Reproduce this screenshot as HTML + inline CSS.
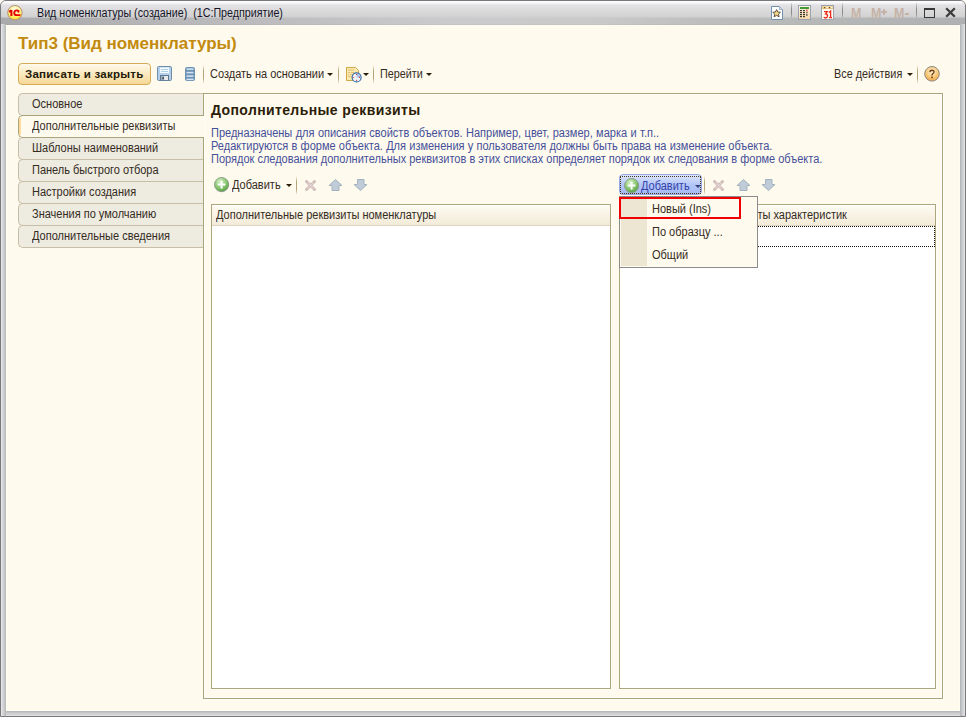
<!DOCTYPE html>
<html><head><meta charset="utf-8">
<style>
*{margin:0;padding:0;box-sizing:border-box}
html,body{width:966px;height:717px;overflow:hidden;background:#FFFAEE}
body{position:relative;font-family:"Liberation Sans",sans-serif;font-size:11px;color:#342C1E}
.a{position:absolute;white-space:nowrap}
svg.a{overflow:visible}
#frame{position:absolute;left:0;top:0;width:966px;height:717px;background:#D0D0D2;border:1px solid #79787C;border-radius:6px 6px 0 0}
#ls{position:absolute;left:1px;top:24px;width:5px;height:692px;background:linear-gradient(to right,#E4E4E4 0,#E4E4E4 1px,#D8D6D8 1px,#D8D6D8 2px,#D2D2D6 2px,#D2D2D6 3px,#C4C6C8 3px,#C4C6C8 4px,#BBBCBE 4px)}
#rs{position:absolute;left:960px;top:24px;width:5px;height:692px;background:linear-gradient(to right,#B4B9BC 0,#B4B9BC 1px,#C0C2C4 1px,#C0C2C4 2px,#CFCFD2 2px,#CFCFD2 3px,#D2D2D8 3px,#D2D2D8 4px,#E2E2E4 4px)}
#bs{position:absolute;left:6px;top:711px;width:954px;height:5px;background:linear-gradient(#BAB9BD 0,#BAB9BD 1px,#C4C4C6 1px,#C4C4C6 2px,#D0D0D0 2px,#D0D0D0 4px,#E0DFE2 4px)}
#band{position:absolute;left:1px;top:17px;width:964px;height:7px;background:linear-gradient(to right,#AAAAAD 0,#B6B5B8 150px,#BFBFC2 300px,#CBCBCD 450px,#C9C9CA 600px,#BEBEBF 700px,#B7B8B8 800px,#AFB1B3 964px);border-top:1px solid rgba(208,208,206,.6)}
#inner{position:absolute;left:1px;top:24px;width:964px;height:1px;background:linear-gradient(to right,#A6A6A9 0,#B0AFB2 150px,#B9B9BC 300px,#C4C4C6 450px,#C3C3C4 600px,#B8B8B9 700px,#B2B3B3 800px,#AAACAE 964px)}
#tb{position:absolute;left:1px;top:1px;width:964px;height:23px;background:linear-gradient(#FDFDFD 0,#F8F8F8 2px,#EAEAEC 3px,#E4E2E4 4px,#DEDCDE 8px,#D8D8D8 11px,#D4D4D4 15px,#CECECE 16px,#C8C8C8 17px,#C8C8C8 22px);border-radius:5px 5px 0 0}
#content{position:absolute;left:6px;top:25px;width:954px;height:686px;background:#FFFAEE;box-shadow:inset 1px 0 0 #FFFFF2,inset -1px -1px 0 #FFFFF2}
.sep{position:absolute;width:1px;background:linear-gradient(rgba(180,165,120,0),#B4A478 30%,#B4A478 70%,rgba(180,165,120,0))}
.tsep{position:absolute;width:1px;background:linear-gradient(rgba(130,130,134,.2),#8C8C90 40%,#8C8C90 70%,rgba(130,130,134,.2))}
.arr{position:absolute;width:0;height:0;border-left:3px solid transparent;border-right:3px solid transparent;border-top:3px solid #2A1E08}
.tab{position:absolute;left:18px;width:186px;height:23px;border:1px solid #C6BEA6;border-right:none;border-radius:5px 0 0 5px;background:#EEEBE1}
.tab span{position:absolute;left:13px;top:3px;font-size:12px;transform:scaleX(.917);transform-origin:0 0}
.panel{position:absolute;border:1px solid #A9A47C;box-shadow:1px 1px 0 #FFFFF8,inset 1px 1px 0 #FFFFF8,inset -1px -1px 0 #FFFFF8}
.tbl{position:absolute;border:1px solid #ABA67E;background:#fff;overflow:hidden;box-shadow:1px 1px 0 #FFFFF8}
.th{position:absolute;left:0;top:0;right:0;height:21px;background:linear-gradient(#FFFFFF 0,#FFFFFF 1px,#FDFAF1 1px,#F3EBD8 20px,#DCD4BC 20px)}
.desc{color:#44509A}
.dis{position:absolute}
.t{font-size:12px;transform:scaleX(.917);transform-origin:0 0}
</style></head><body>
<div id="frame"></div>
<div id="tb"></div>
<div id="band"></div>
<div id="inner"></div>
<div id="ls"></div><div id="rs"></div><div id="bs"></div>
<div id="content"></div>

<!-- title -->
<svg class="a" style="left:7px;top:5px" width="16" height="16" viewBox="0 0 16 16">
<defs><radialGradient id="g1c" cx="50%" cy="30%" r="70%"><stop offset="0" stop-color="#FFFFF0"/><stop offset=".5" stop-color="#FFF59A"/><stop offset="1" stop-color="#FFE020"/></radialGradient></defs>
<circle cx="7.9" cy="7.7" r="7.2" fill="url(#g1c)" stroke="#B48C74" stroke-width="1"/>
<path d="M2.1 6.9 L4.4 5.3 M4.4 5.1 V10.9" fill="none" stroke="#E40000" stroke-width="2"/>
<path d="M11.9 6.4 Q11 5.3 9.7 5.4 Q7.2 5.6 7.2 8.1 Q7.3 10.1 9.6 10.1 H13.4" fill="none" stroke="#E40000" stroke-width="1.8"/>
<circle cx="11.4" cy="6.7" r="1.05" fill="#E40000"/>
</svg>
<div class="a t" style="left:37px;top:6px;transform:scaleX(.892);color:#141428">Вид номенклатуры (создание)&nbsp; (1С:Предприятие)</div>

<!-- title bar right icons -->
<svg class="a" style="left:771px;top:6px" width="13" height="14" viewBox="0 0 13 14">
<path d="M0.5 0.5 H8.5 L11.5 3.5 V13.5 H0.5Z" fill="#FFFFFF" stroke="#7090B0"/>
<path d="M8.5 0.5 V3.5 H11.5" fill="#DCE6F0" stroke="#9CB2C8"/>
<path d="M5.6 3.6 L6.8 6 L9.4 6.3 L7.5 8.1 L8.1 10.8 L5.6 9.4 L3.1 10.8 L3.7 8.1 L1.8 6.3 L4.4 6Z" fill="#F4D688" stroke="#4A4438" stroke-width=".9"/>
</svg>
<div class="tsep" style="left:791px;top:3px;height:15px"></div>
<svg class="a" style="left:798px;top:5px" width="13" height="15" viewBox="0 0 13 15">
<defs><linearGradient id="gcalc" x1="0" y1="0" x2="0" y2="1"><stop offset="0" stop-color="#FFF6E4"/><stop offset="1" stop-color="#F6D6A6"/></linearGradient>
<linearGradient id="gcal" x1="0" y1="0" x2="0" y2="1"><stop offset="0" stop-color="#F6DCA0"/><stop offset="1" stop-color="#E6B868"/></linearGradient></defs>
<rect x=".5" y=".5" width="12" height="14" fill="url(#gcalc)" stroke="#9AA4B0"/>
<rect x="2" y="2" width="9" height="2" fill="#3E9C38"/>
<g fill="#3C3830"><rect x="2" y="5" width="2" height="1.2"/><rect x="5" y="5" width="2" height="1.2"/><rect x="2" y="7" width="2" height="1.2"/><rect x="5" y="7" width="2" height="1.2"/><rect x="8.3" y="7" width="1.2" height="1.2"/><rect x="2" y="9" width="2" height="1.2"/><rect x="5" y="9" width="2" height="1.2"/><rect x="8.3" y="9" width="1.2" height="1.8"/><rect x="2" y="11" width="2" height="1.2"/><rect x="5" y="11" width="2" height="1.2"/></g>
<rect x="8.3" y="4.6" width="1.2" height="1.8" fill="#E82020"/>
</svg>
<svg class="a" style="left:821px;top:5px" width="13" height="15" viewBox="0 0 13 15">
<rect x=".5" y=".5" width="12" height="14" fill="#FFFAF2" stroke="#9AA4B0"/>
<rect x="1" y="1" width="11" height="3" fill="url(#gcal)"/>
<g fill="#6A4A28"><rect x="3" y="2" width="1.2" height="1.2"/><rect x="8" y="2" width="1.2" height="1.2"/></g>
<g fill="#FFFFFF"><rect x="5.5" y="2" width="1.2" height="1.2"/><rect x="10" y="2" width="1.2" height="1.2"/></g>
<path d="M3 6.6 H6.3 L4.6 8.9 Q6.6 9 6.5 11 Q6.3 13 4.5 13 Q3.3 13 2.8 12.2" fill="none" stroke="#EA2A1A" stroke-width="1.3"/>
<path d="M7.9 7.4 L9.6 6.1 V12.9 M8 12.6 H11" fill="none" stroke="#EA2A1A" stroke-width="1.3"/>
</svg>
<div class="tsep" style="left:842px;top:3px;height:15px"></div>
<div class="a" style="left:851px;top:5px;font:bold 14.5px 'Liberation Sans';color:#C6B4A8;transform:scaleX(.86);transform-origin:0 0">M</div>
<div class="a" style="left:871px;top:5px;font:bold 14.5px 'Liberation Sans';color:#C6B4A8;transform:scaleX(.86);transform-origin:0 0">M</div>
<div class="a" style="left:881px;top:11px;width:6px;height:2px;background:#C6B4A8"></div><div class="a" style="left:883px;top:9px;width:2px;height:6px;background:#C6B4A8"></div>
<div class="a" style="left:894px;top:5px;font:bold 14.5px 'Liberation Sans';color:#C6B4A8;transform:scaleX(.86);transform-origin:0 0">M</div>
<div class="a" style="left:905px;top:13px;width:4px;height:2px;background:#C6B4A8"></div>
<div class="tsep" style="left:916px;top:3px;height:15px"></div>
<div class="a" style="left:924px;top:8px;width:11px;height:10px;border:1px solid #383838;border-top-width:2px"></div>
<svg class="a" style="left:945px;top:7px" width="11" height="11" viewBox="0 0 11 11"><path d="M1.2 1.2 L9.8 9.8 M9.8 1.2 L1.2 9.8" stroke="#3C3C3C" stroke-width="2.3"/></svg>

<!-- form header -->
<div class="a" style="left:18px;top:34px;font:bold 17px 'Liberation Sans';color:#C28A0E">Тип3 (Вид номенклатуры)</div>

<!-- command bar -->
<div class="a" style="left:18px;top:63px;width:133px;height:22px;border:1px solid #D6AC58;border-radius:4px;background:linear-gradient(#FFFAEC 0,#FBEBC4 45%,#F4D896 100%)"></div>
<div class="a" style="left:25px;top:68px;font:bold 11.5px 'Liberation Sans';letter-spacing:0.25px;color:#241A08">Записать и закрыть</div>
<svg class="a" style="left:157px;top:66px" width="15" height="15" viewBox="0 0 15 15">
<rect x=".5" y=".5" width="14" height="14" rx="1.2" fill="#B4D0EA" stroke="#6E8EA8"/>
<rect x="3" y="1.5" width="9" height="5.5" fill="#F6FBFF"/>
<rect x="4" y="3" width="7" height=".9" fill="#A6CCE0"/><rect x="4" y="5" width="7" height=".9" fill="#A6CCE0"/>
<rect x="3" y="9" width="9" height="5.5" fill="#5C7890"/>
<rect x="4.5" y="10" width="6.5" height="4" fill="#E6E8EA"/>
<rect x="5.3" y="10.6" width="1.6" height="3" fill="#2E4860"/>
</svg>
<svg class="a" style="left:185px;top:67px" width="10" height="14" viewBox="0 0 10 14">
<rect x="0" y="0" width="10" height="14" rx="2" fill="#6C92B2"/>
<g fill="#D2E4F6"><rect x="1.5" y="1.3" width="7" height="1.6"/><rect x="1.5" y="4.8" width="7" height="1.6"/><rect x="1.5" y="8.3" width="7" height="1.6"/><rect x="1.5" y="11.6" width="7" height="1.5"/></g>
</svg>
<div class="sep" style="left:203px;top:65px;height:19px"></div>
<div class="a t" style="left:210px;top:67px">Создать на основании</div>
<div class="arr" style="left:327px;top:73px"></div>
<div class="sep" style="left:338px;top:65px;height:19px"></div>
<svg class="a" style="left:346px;top:67px" width="16" height="16" viewBox="0 0 16 16">
<path d="M0.5 0.5 H9.5 L12.5 3.5 V13.5 H0.5Z" fill="#FBEAB0" stroke="#D0A848"/>
<g fill="#E0C070"><rect x="2" y="2.5" width="6" height="1"/><rect x="2" y="5" width="2" height="1"/><rect x="5" y="5" width="3" height="1"/><rect x="2" y="7" width="1" height="1"/><rect x="4" y="7" width="3" height="1"/><rect x="2" y="9" width="3" height="1"/></g>
<circle cx="10.6" cy="10.4" r="4.5" fill="#EEF4FE" stroke="#3A6CA6" stroke-width="1.2"/>
<path d="M10.6 10.4 V6.8 A3.6 3.6 0 0 1 14.2 10.4Z" fill="#A8C0E8"/>
<g fill="#E02020"><rect x="10.1" y="7" width="1" height="1"/><rect x="10.1" y="12.8" width="1" height="1"/><rect x="7.2" y="9.9" width="1" height="1"/><rect x="13" y="9.9" width="1" height="1"/></g>
</svg>
<div class="arr" style="left:363px;top:73px"></div>
<div class="sep" style="left:373px;top:65px;height:19px"></div>
<div class="a t" style="left:380px;top:67px;transform:scaleX(.9)">Перейти</div>
<div class="arr" style="left:426px;top:73px"></div>
<div class="a t" style="left:834px;top:67px;transform:scaleX(.905)">Все действия</div>
<div class="arr" style="left:907px;top:73px"></div>
<div class="sep" style="left:917px;top:65px;height:19px"></div>
<svg class="a" style="left:924px;top:66px" width="16" height="16" viewBox="0 0 16 16">
<defs><radialGradient id="ghelp" cx="50%" cy="35%" r="65%"><stop offset="0" stop-color="#FFF4DC"/><stop offset=".6" stop-color="#F8C878"/><stop offset="1" stop-color="#EEA446"/></radialGradient></defs>
<circle cx="8" cy="7.8" r="7.3" fill="url(#ghelp)" stroke="#8E8A84" stroke-width="1"/>
<path d="M5.9 6.1 Q6 4.3 8.1 4.3 Q10.1 4.4 10 6 Q9.9 7.1 8.7 7.7 Q8 8.2 8 9.5" fill="none" stroke="#704014" stroke-width="1.4"/>
<rect x="7.2" y="10.6" width="1.6" height="1.6" fill="#704014"/>
</svg>

<!-- tabs -->
<div class="tab" style="top:93px"><span>Основное</span></div>
<div class="tab" style="top:137px"><span>Шаблоны наименований</span></div>
<div class="tab" style="top:159px"><span>Панель быстрого отбора</span></div>
<div class="tab" style="top:181px"><span>Настройки создания</span></div>
<div class="tab" style="top:203px"><span>Значения по умолчанию</span></div>
<div class="tab" style="top:225px"><span>Дополнительные сведения</span></div>

<!-- panel -->
<div class="panel" style="left:203px;top:93px;width:740px;height:606px"></div>
<div class="tab" style="top:115px;background:#FFFAEE;width:186px;border-color:#A9A47C"><span>Дополнительные реквизиты</span></div>
<div class="a" style="left:19px;top:118px;width:2px;height:17px;background:#FFDA9C"></div>

<div class="a" style="left:211px;top:102px;font:bold 14px 'Liberation Sans';letter-spacing:0.38px;color:#2A2008">Дополнительные реквизиты</div>
<div class="a desc t" style="left:211px;top:126px;word-spacing:0.4px">Предназначены для описания свойств объектов. Например, цвет, размер, марка и т.п..</div>
<div class="a desc t" style="left:211px;top:139px;word-spacing:0.2px">Редактируются в форме объекта. Для изменения у пользователя должны быть права на изменение объекта.</div>
<div class="a desc t" style="left:211px;top:152px">Порядок следования дополнительных реквизитов в этих списках определяет порядок их следования в форме объекта.</div>

<!-- left table toolbar -->
<svg class="a" style="left:214px;top:177px" width="16" height="16" viewBox="0 0 16 16">
<defs><radialGradient id="gplus" cx="40%" cy="30%" r="75%"><stop offset="0" stop-color="#D8F2C8"/><stop offset=".55" stop-color="#8CC874"/><stop offset="1" stop-color="#4F9A3E"/></radialGradient></defs>
<circle cx="7.6" cy="7.6" r="7.1" fill="url(#gplus)" stroke="#8E9E8C" stroke-width="1"/>
<path d="M7.6 3.8 V11.4 M3.8 7.6 H11.4" stroke="#FFFFFF" stroke-width="2"/>
</svg>
<div class="a t" style="left:232px;top:178px">Добавить</div>
<div class="arr" style="left:286px;top:184px"></div>
<div class="sep" style="left:296px;top:176px;height:19px"></div>
<svg class="a" style="left:305px;top:180px" width="11" height="11" viewBox="0 0 11 11"><path d="M1.5 1.5 L9.5 9.5 M9.5 1.5 L1.5 9.5" stroke="#CDB6B4" stroke-width="2.8" stroke-linecap="round"/><path d="M2 2 L9 9 M9 2 L2 9" stroke="#E2D4D2" stroke-width="1.1"/></svg>
<svg class="a" style="left:329px;top:179px" width="14" height="12" viewBox="0 0 14 12"><path d="M6.5 0.5 L13 6.5 H10 V11.5 H3 V6.5 H0 Z" fill="#BFCCD8" stroke="#A2B2C0" stroke-width="1" stroke-linejoin="round"/></svg>
<svg class="a" style="left:354px;top:179px" width="14" height="12" viewBox="0 0 14 12"><path d="M3.5 0.5 H10 V5.5 H13 L6.5 11.5 L0 5.5 H3.5Z" fill="#BFCCD8" stroke="#A2B2C0" stroke-width="1" stroke-linejoin="round"/></svg>

<!-- left table -->
<div class="tbl" style="left:211px;top:204px;width:400px;height:485px"><div class="th"></div></div>
<div class="a t" style="left:216px;top:208px">Дополнительные реквизиты номенклатуры</div>

<!-- right table -->
<div class="tbl" style="left:619px;top:204px;width:317px;height:485px"><div class="th"></div>
<div class="a" style="left:0;top:21px;width:315px;height:21px;border:1px dotted #101010"></div>
<div class="a t" style="left:7px;top:3px">Дополнительные реквизиты характеристик</div>
</div>

<!-- right toolbar -->
<div class="a" style="left:619px;top:174px;width:83px;height:21px;border:1px solid #96A8E6;border-radius:4px;background:linear-gradient(#DCE6FE,#B4C6F8 50%,#A6BAF4)"></div>
<div class="a" style="left:620px;top:176px;width:81px;height:18px;border:1px dotted #4A3A18"></div>
<svg class="a" style="left:624px;top:178px" width="16" height="16" viewBox="0 0 16 16">
<circle cx="7.6" cy="7.6" r="7.1" fill="url(#gplus)" stroke="#8E9E8C" stroke-width="1"/>
<path d="M7.6 3.8 V11.4 M3.8 7.6 H11.4" stroke="#FFFFFF" stroke-width="2"/>
</svg>
<div class="a t" style="left:641px;top:179px;color:#3444A8">Добавить</div>
<div class="arr" style="left:695px;top:185px;border-top-color:#34407A"></div>
<div class="sep" style="left:704px;top:176px;height:19px"></div>
<svg class="a" style="left:713px;top:180px" width="11" height="11" viewBox="0 0 11 11"><path d="M1.5 1.5 L9.5 9.5 M9.5 1.5 L1.5 9.5" stroke="#CDB6B4" stroke-width="2.8" stroke-linecap="round"/><path d="M2 2 L9 9 M9 2 L2 9" stroke="#E2D4D2" stroke-width="1.1"/></svg>
<svg class="a" style="left:737px;top:179px" width="14" height="12" viewBox="0 0 14 12"><path d="M6.5 0.5 L13 6.5 H10 V11.5 H3 V6.5 H0 Z" fill="#BFCCD8" stroke="#A2B2C0" stroke-width="1" stroke-linejoin="round"/></svg>
<svg class="a" style="left:762px;top:179px" width="14" height="12" viewBox="0 0 14 12"><path d="M3.5 0.5 H10 V5.5 H13 L6.5 11.5 L0 5.5 H3.5Z" fill="#BFCCD8" stroke="#A2B2C0" stroke-width="1" stroke-linejoin="round"/></svg>

<!-- dropdown menu -->
<div class="a" style="left:619px;top:196px;width:139px;height:72px;border:1px solid #8C8C8C;background:#FFFAEE"></div>
<div class="a" style="left:621px;top:198px;width:26px;height:68px;background:#EDE6D2"></div>
<div class="a" style="left:619px;top:197px;width:122px;height:22px;border:2px solid #F00000"></div>
<div class="a t" style="left:652px;top:202px">Новый (Ins)</div>
<div class="a t" style="left:652px;top:225px">По образцу ...</div>
<div class="a t" style="left:652px;top:248px">Общий</div>
</body></html>
